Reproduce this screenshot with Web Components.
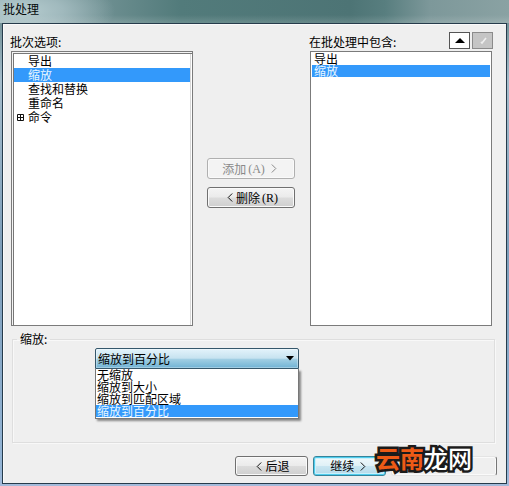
<!DOCTYPE html>
<html lang="zh-CN">
<head>
<meta charset="utf-8">
<title>批处理</title>
<style>
html,body{margin:0;height:100%;overflow:hidden}
body{font:12px/14px "Noto Sans CJK SC",sans-serif;color:#000}
</style>
</head>
<body>
<batch-dialog></batch-dialog>
<script>
const define = (name, html, setup) => customElements.define(name, class extends HTMLElement {
  connectedCallback() {
    if (this.shadowRoot) return;
    this.attachShadow({mode: 'open'}).innerHTML = html;
    if (setup) setup(this, this.shadowRoot);
  }
});

define('list-row', `<style>
:host{display:flex;align-items:center;box-sizing:border-box;height:var(--row,14px);line-height:var(--row,14px);padding-left:var(--indent,14px);white-space:nowrap;flex:none}
:host([selected]){background:#3399fb;color:#e8f6ff}
:host([expandable]){padding-left:3px}
svg{display:none;width:7px;height:7px;margin-right:4px}
:host([expandable]) svg{display:block}
</style><svg viewBox="0 0 7 7"><path d="M.5.5h6v6h-6zM1 3.5h5M3.5 1v5" fill="none" stroke="#111"/></svg><slot></slot>`);

define('list-panel', `<style>
:host{display:flex;flex-direction:column;box-sizing:border-box;height:275px;border:1px solid #7b7b7b;background:#fff;padding:1px}
:host([sunken]){box-shadow:inset 1px 1px #f4f4f4,inset 2px 2px #777,inset -1px 0 #fff,inset -2px 0 #d8d8d8;padding:2px 2px 0}
</style><slot></slot>`);

define('push-button', `<style>
:host{display:flex;align-items:center;justify-content:center;box-sizing:border-box;border:1px solid #707070;border-radius:3px;background:linear-gradient(#f4f4f4,#ebebeb 48%,#dcdcdc 52%,#cfcfcf);box-shadow:inset 0 0 0 1px #fafafa;white-space:pre;height:20px;line-height:14px}
:host([disabled]){color:#898989;border-color:#b0b0b0;background:#f3f3f3}
:host([primary]){border-color:#35849b;background:linear-gradient(#f1f9fb,#e0f1f7 48%,#c9e6f1 52%,#b4d9e9);box-shadow:inset 0 0 0 1px #4fcdee,inset 0 0 0 2px #c9f0fa}
:host([blank]){background:#efefef;border-color:#e4e4e4 #777 #e4e4e4 #e4e4e4}
::slotted(b){font:12px/14px "Liberation Serif",serif;margin-left:2px}
::slotted(svg){width:6px;height:9px;margin:0 3px}
</style><slot></slot>`);

define('tool-button', `<style>
:host{display:flex;align-items:center;justify-content:center;box-sizing:border-box;width:21px;height:17px;border:1px solid #555;background:#fff}
:host([disabled]){background:#c5c5c5;border-color:#8b8b8b}
</style><slot></slot>`);

define('group-box', `<style>
:host{display:block}
fieldset{box-sizing:border-box;margin:0;border:1px solid #dedede;box-shadow:inset 1px 1px #f8f8f8,1px 1px #f8f8f8;min-width:0;height:111px;padding:2px 0 0 82px}
legend{padding:0 3px;margin-left:-78px;height:14px}
</style><fieldset><legend><slot name="label"></slot></legend><slot></slot></fieldset>`);

define('combo-box', `<style>
:host{display:block;position:relative;width:204px;height:21px}
.field{box-sizing:border-box;height:21px;display:flex;align-items:center;justify-content:space-between;border:1px solid #35576b;border-radius:2px 2px 0 0;background:linear-gradient(#e3f3fb,#c7e3f0 48%,#a0cee3 55%,#70b3d5);box-shadow:inset 0 0 0 1px #ffffff55;padding:0 4px 0 2px}
svg{width:8px;height:5px}
.menu{position:absolute;z-index:2;top:21px;left:0;width:204px;height:50px;box-sizing:border-box;border:solid #777;border-width:0 1px 1px;background:#fff;box-shadow:2px 2px 2px #888;--row:12px;--indent:1px}
</style><div class="field"><span class="value"></span><svg viewBox="0 0 8 5"><path d="M0 0h8L4 4.6z"/></svg></div><div class="menu"><slot></slot></div>`,
(host, root) => root.querySelector('.value').textContent = host.getAttribute('value'));

define('site-mark', `<style>
:host{position:absolute;z-index:3;left:376px;top:443px;font:500 24px/30px "Noto Sans CJK SC",sans-serif;color:#fff;white-space:nowrap;-webkit-text-stroke:5px #1b1b1b;paint-order:stroke fill}
span{color:#ed5a16;font-weight:bold}
</style><span>云南</span>龙网`);

define('batch-dialog', `<style>
:host{display:flex;flex-direction:column;box-sizing:border-box;position:relative;width:509px;height:486px;background:linear-gradient(#719096 20px,#a4bccb 80px,#7d9eba 250px,#94b5d6 470px,#a5bbdb)}
header{height:23px;box-sizing:border-box;padding:2px 0 0 3px;line-height:14px;color:#05090a;background:linear-gradient(#0000 65%,#ffffff25),radial-gradient(ellipse 95px 35px at 20px 11px,#b7cdd0,#a0b9bd 45%,transparent),linear-gradient(90deg,#829fa2,#6f9092 100px,#527b7b 180px,#4d7475 350px,#587e7f 385px,#7d989a 430px,#8aa2a3)}
main{flex:1;margin:0 2px 2px;border:1px solid #263b4b;background:#efefef;display:flex;flex-direction:column;box-shadow:inset 1px 1px #fafafa;min-height:0}
.lists{display:grid;grid-template-columns:182px 88px 182px;column-gap:14px;padding:8px 0 0 8px;height:294px;box-sizing:content-box}
.lists .included{margin-left:1px;margin-right:-1px}
.head{display:flex;height:19px;align-items:flex-start;white-space:nowrap}
.head span{padding-top:3px;margin-left:-1px}
.tools{display:flex;gap:2px;margin-left:auto;margin-right:-1px}
.actions{display:flex;flex-direction:column;gap:8px;padding-top:126px}
.actions push-button{height:21px}
.included{--row:12px;--indent:2px}
group-box{margin:6px 11px 0 9px}
footer{display:flex;gap:5px;margin:13px 9px 0 auto}
footer push-button{width:73px}
footer push-button[blank]{width:106px}
</style>
<header>批处理</header>
<main>
<div class="lists">
 <section><div class="head"><span>批次选项:</span></div>
 <list-panel sunken><list-row>导出</list-row><list-row selected>缩放</list-row><list-row>查找和替换</list-row><list-row>重命名</list-row><list-row expandable>命令</list-row></list-panel></section>
 <div class="actions"><push-button disabled>添加<b>(A) </b><svg viewBox="0 0 6 9"><path d="M.8.5l4 4-4 4" fill="none" stroke="#898989"/></svg></push-button><push-button><svg viewBox="0 0 6 9"><path d="M5.2.5l-4 4 4 4" fill="none" stroke="#111"/></svg>删除<b>(R)</b></push-button></div>
 <section class="included"><div class="head"><span>在批处理中包含:</span><div class="tools"><tool-button><svg width="10" height="5"><path d="M5 0l5 5H0z"/></svg></tool-button><tool-button disabled><svg width="12" height="9"><path d="M4 6l1 1 4-5" fill="none" stroke="#eee" stroke-width="1.7"/></svg></tool-button></div></div>
 <list-panel><list-row>导出</list-row><list-row selected>缩放</list-row></list-panel></section>
</div>
<group-box><span slot="label">缩放:</span>
 <combo-box value="缩放到百分比"><list-row>无缩放</list-row><list-row>缩放到大小</list-row><list-row>缩放到匹配区域</list-row><list-row selected>缩放到百分比</list-row></combo-box>
</group-box>
<footer><push-button><svg viewBox="0 0 6 9"><path d="M5.2.5l-4 4 4 4" fill="none" stroke="#111"/></svg>后退</push-button><push-button primary>继续 <svg viewBox="0 0 6 9"><path d="M.8.5l4 4-4 4" fill="none" stroke="#111"/></svg></push-button><push-button blank></push-button></footer>
</main>
<site-mark></site-mark>`);
</script>
</body>
</html>
